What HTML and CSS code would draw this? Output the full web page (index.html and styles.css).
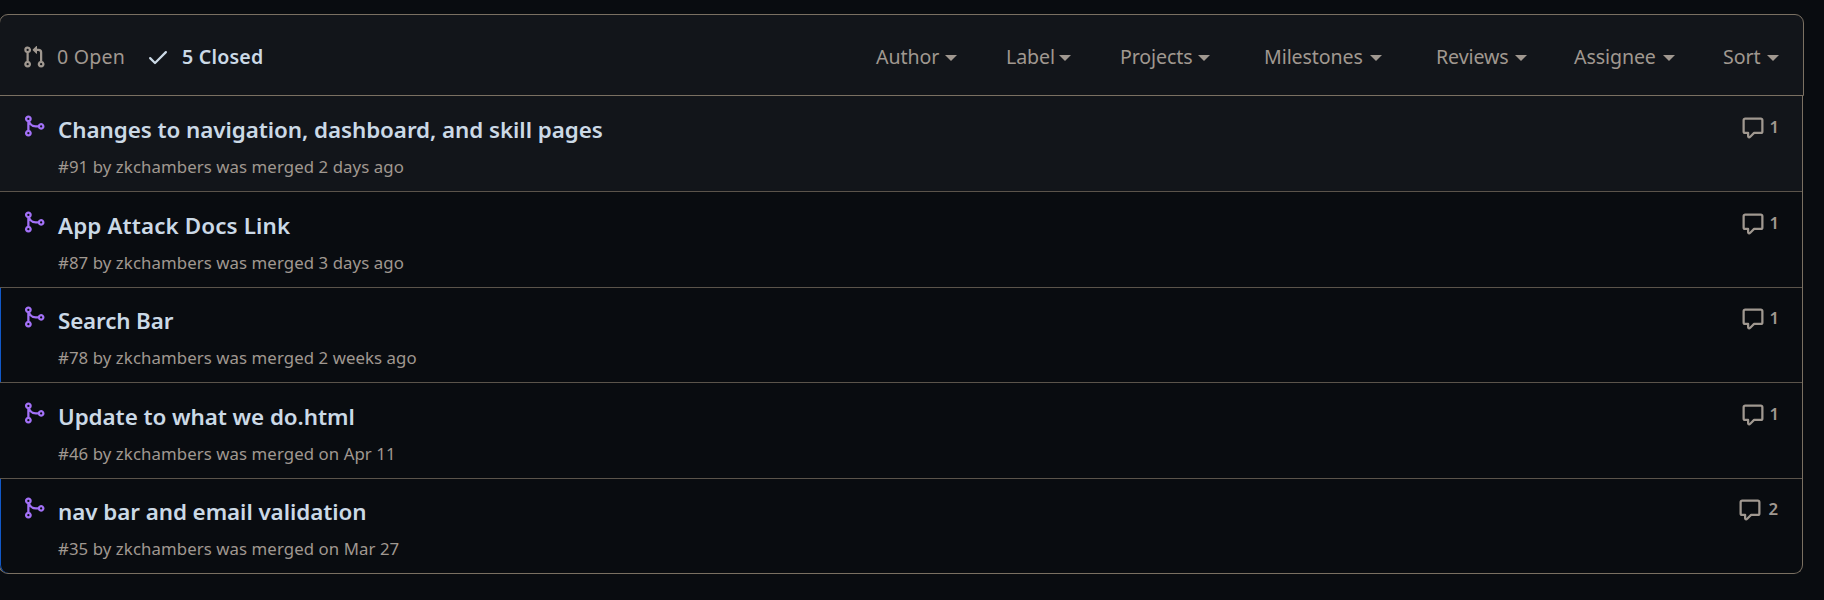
FILE: index.html
```html
<!DOCTYPE html>
<html lang="en">
<head>
<meta charset="utf-8">
<title>Pull requests</title>
<link rel="stylesheet" href="styles.css">
</head>
<body>
<svg class="sprite" aria-hidden="true">
  <symbol id="pr" viewBox="0 0 16 16"><path d="M1.5 3.25a2.25 2.25 0 1 1 3 2.122v5.256a2.251 2.251 0 1 1-1.5 0V5.372A2.25 2.25 0 0 1 1.5 3.25Zm5.677-.177L9.573.677A.25.25 0 0 1 10 .854V2.5h1A2.5 2.5 0 0 1 13.5 5v5.628a2.251 2.251 0 1 1-1.5 0V5a1 1 0 0 0-1-1h-1v1.646a.25.25 0 0 1-.427.177L7.177 3.427a.25.25 0 0 1 0-.354ZM3.75 2.5a.75.75 0 1 0 0 1.5.75.75 0 0 0 0-1.5Zm0 9.5a.75.75 0 1 0 0 1.5.75.75 0 0 0 0-1.5Zm8.25.75a.75.75 0 1 0 1.5 0 .75.75 0 0 0-1.5 0Z"/></symbol>
  <symbol id="check" viewBox="0 0 16 16"><path d="M13.78 4.22a.75.75 0 0 1 0 1.06l-7.25 7.25a.75.75 0 0 1-1.06 0L2.22 9.28a.751.751 0 0 1 .018-1.042.751.751 0 0 1 1.042-.018L6 10.94l6.72-6.72a.75.75 0 0 1 1.06 0Z"/></symbol>
  <symbol id="merge" viewBox="0 0 16 16"><path d="M5.45 5.154A4.25 4.25 0 0 0 9.25 7.5h1.378a2.251 2.251 0 1 1 0 1.5H9.25A5.734 5.734 0 0 1 5 7.123v3.505a2.25 2.25 0 1 1-1.5 0V5.372a2.25 2.25 0 1 1 1.95-.218ZM4.25 13.5a.75.75 0 1 0 0-1.5.75.75 0 0 0 0 1.5Zm8.5-4.5a.75.75 0 1 0 0-1.5.75.75 0 0 0 0 1.5ZM5 3.25a.75.75 0 1 0-1.5 0 .75.75 0 0 0 1.5 0Z"/></symbol>
  <symbol id="comment" viewBox="0 0 16 16"><path d="M1 2.75C1 1.784 1.784 1 2.75 1h10.5c.966 0 1.75.784 1.75 1.75v7.5A1.75 1.75 0 0 1 13.25 12H9.06l-2.573 2.573A1.458 1.458 0 0 1 4 13.543V12H2.75A1.75 1.75 0 0 1 1 10.25Zm1.75-.25a.25.25 0 0 0-.25.25v7.5c0 .138.112.25.25.25h2a.75.75 0 0 1 .75.75v2.19l2.72-2.72a.749.749 0 0 1 .53-.22h4.5a.25.25 0 0 0 .25-.25v-7.5a.25.25 0 0 0-.25-.25Z"/></symbol>
</svg>
<main class="box">
  <header class="head">
    <a class="state"><svg class="icon"><use href="#pr"/></svg><span>0 Open</span></a>
    <a class="state closed"><svg class="icon"><use href="#check"/></svg><span>5 Closed</span></a>
    <nav class="filters">
      <a class="filter author">Author</a>
      <a class="filter label">Label</a>
      <a class="filter projects">Projects</a>
      <a class="filter milestones">Milestones</a>
      <a class="filter reviews">Reviews</a>
      <a class="filter assignee">Assignee</a>
      <a class="filter sort">Sort</a>
    </nav>
  </header>
  <section class="list">
    <article class="row active">
      <svg class="icon merge"><use href="#merge"/></svg>
      <div class="body"><h2 class="title">Changes to navigation, dashboard, and skill pages</h2><p class="meta">#91 by zkchambers was merged 2 days ago</p></div>
      <a class="comments single"><svg class="icon"><use href="#comment"/></svg><span>1</span></a>
    </article>
    <article class="row">
      <svg class="icon merge"><use href="#merge"/></svg>
      <div class="body"><h2 class="title wide">App Attack Docs Link</h2><p class="meta">#87 by zkchambers was merged 3 days ago</p></div>
      <a class="comments single"><svg class="icon"><use href="#comment"/></svg><span>1</span></a>
    </article>
    <article class="row short unread">
      <svg class="icon merge"><use href="#merge"/></svg>
      <div class="body"><h2 class="title narrow">Search Bar</h2><p class="meta">#78 by zkchambers was merged 2 weeks ago</p></div>
      <a class="comments single"><svg class="icon"><use href="#comment"/></svg><span>1</span></a>
    </article>
    <article class="row">
      <svg class="icon merge"><use href="#merge"/></svg>
      <div class="body"><h2 class="title">Update to what we do.html</h2><p class="meta">#46 by zkchambers was merged on Apr 11</p></div>
      <a class="comments single"><svg class="icon"><use href="#comment"/></svg><span>1</span></a>
    </article>
    <article class="row short unread">
      <svg class="icon merge"><use href="#merge"/></svg>
      <div class="body"><h2 class="title">nav bar and email validation</h2><p class="meta">#35 by zkchambers was merged on Mar 27</p></div>
      <a class="comments"><svg class="icon"><use href="#comment"/></svg><span>2</span></a>
    </article>
  </section>
</main>
</body>
</html>
```
FILE: styles.css
```css
* { box-sizing: border-box; }
body {
  margin: 0;
  height: 600px;
  overflow: hidden;
  background: #090c10;
  color: #a09890;
  font-family: "Segoe UI", "Noto Sans", sans-serif;
}
.sprite { display: none; }
.icon { width: 24px; height: 24px; fill: currentColor; flex: none; display: block; }
.box { padding-top: 14px; }

.head {
  display: flex;
  align-items: center;
  width: 1805px;
  height: 82px;
  margin-left: -1px;
  padding: 4px 24px 0 22px;
  border: 1px solid #7a7062;
  border-radius: 9px 9px 0 0;
  background: #12151a;
  font-size: 19.6px;
  line-height: 30px;
}
.state { display: flex; align-items: center; gap: 11px; width: 124px; }
.state span { letter-spacing: 0.2px; }
.closed { color: #cbd9e6; font-weight: 600; gap: 12px; }
.filters { display: flex; margin-left: auto; }
.filter { display: flex; justify-content: space-between; align-items: center; margin-right: 49px; letter-spacing: -0.1px; }
.filter::after {
  content: "";
  margin-top: 2px;
  border: 6px solid transparent;
  border-top-color: currentColor;
  border-bottom: 0;
}
.author { width: 81px; }
.label { width: 65px; }
.projects { width: 90px; margin-right: 54px; }
.milestones { width: 118px; margin-right: 54px; }
.reviews { width: 91px; margin-right: 47px; }
.assignee { width: 101px; margin-right: 48px; }
.sort { width: 56px; margin-right: 0; }

.list {
  width: 1804px;
  margin-left: -1px;
  border: 1px solid #7a7062;
  border-top: 0;
  border-radius: 0 0 9px 9px;
  overflow: hidden;
}
.row { display: flex; height: 96px; padding: 18px 24px 0 22px; border-bottom: 1px solid #5b544b; }
.row:last-child { height: 94px; border-bottom: 0; border-radius: 0 0 0 8px; }
.short { height: 95px; padding-top: 17px; }
.row:nth-child(2) { height: 96px; }
.active { background: #12151a; }
.unread { box-shadow: inset 1px 0 #1158c7; }
.merge { color: #a371f7; }
.body { flex: 1; padding-left: 12px; }
.title { margin: 0; font-size: 22.4px; line-height: 32px; font-weight: 600; color: #cbd9e6; letter-spacing: -0.06px; }
.wide { letter-spacing: 0.12px; }
.narrow { letter-spacing: -0.15px; }
.meta { margin: 7px 0 0; font-size: 16.8px; line-height: 28px; letter-spacing: 0.08px; }
.comments { display: flex; gap: 6px; height: 26px; font-size: 16.8px; font-weight: 600; line-height: 26px; }
.comments .icon { margin-top: 2px; }
.single { gap: 4px; margin-right: -1px; }
```
